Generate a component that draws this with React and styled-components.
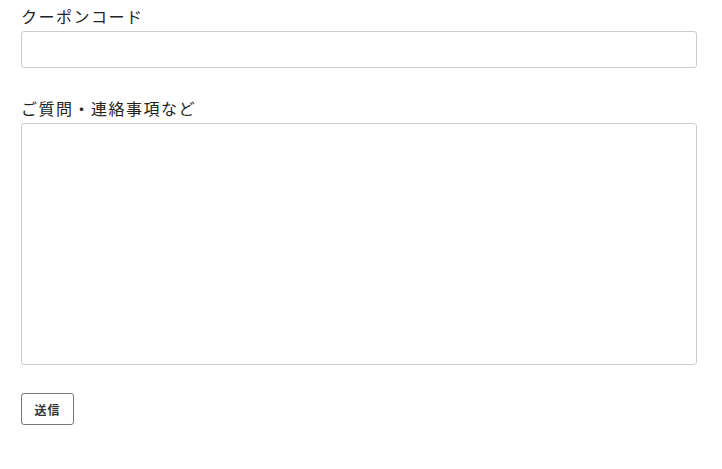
import React from "react";
import styled, { createGlobalStyle } from "styled-components";

const GlobalStyle = createGlobalStyle`
  body {
    margin: 0;
    background: #fff;
    font-family: "Noto Sans CJK JP", "Liberation Sans", sans-serif;
    color: #222;
  }
`;

const Form = styled.form`
  padding: 4px 25px 0 21px;
  display: flex;
  flex-direction: column;
`;

const Field = styled.div`
  display: flex;
  flex-direction: column;
  margin-bottom: ${props => props.gap || 0}px;
`;

const Label = styled.label`
  font-size: 16px;
  letter-spacing: 1.5px;
  line-height: 24px;
  margin-bottom: 3px;
  color: #222;
`;

const Input = styled.input`
  box-sizing: border-box;
  height: 37px;
  border: 1px solid #ccc;
  border-radius: 3px;
  padding: 6px 10px;
  font-size: 14px;
`;

const TextArea = styled.textarea`
  box-sizing: border-box;
  height: 242px;
  border: 1px solid #ccc;
  border-radius: 3px;
  padding: 6px 10px;
  resize: none;
  font-size: 14px;
`;

const Button = styled.button`
  align-self: flex-start;
  box-sizing: border-box;
  width: 53px;
  height: 32px;
  background: #fff;
  border: 1px solid #777;
  border-radius: 3px;
  font-family: "Noto Sans CJK JP", sans-serif;
  font-size: 12px;
  font-weight: bold;
  letter-spacing: 1px;
  color: #333;
  padding: 0;
`;

export default function App() {
  return (
    <>
      <GlobalStyle />
      <Form onSubmit={e => e.preventDefault()}>
        <Field gap={28}>
          <Label>クーポンコード</Label>
          <Input type="text" />
        </Field>
        <Field gap={28}>
          <Label>ご質問・連絡事項など</Label>
          <TextArea />
        </Field>
        <Button type="submit">送信</Button>
      </Form>
    </>
  );
}
